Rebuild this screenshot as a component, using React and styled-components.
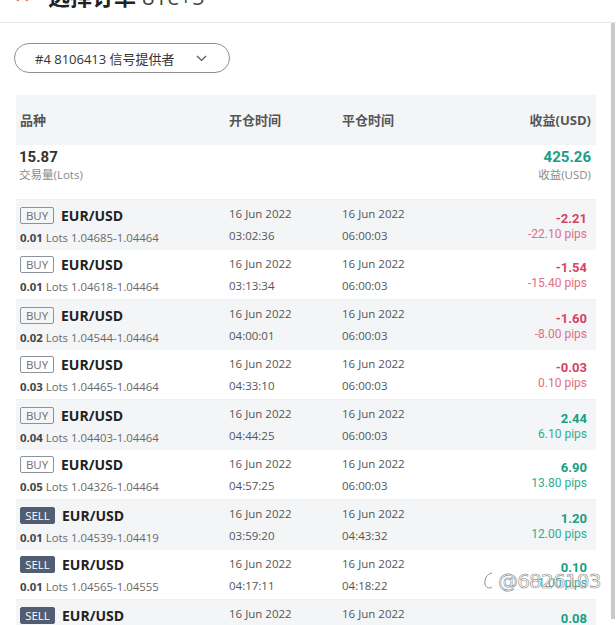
import React from 'react'
import styled, { createGlobalStyle } from 'styled-components'

const GlobalStyle = createGlobalStyle`
  html, body { margin: 0; padding: 0; background: #fff; }
  body { font-family: "Open Sans", "Noto Sans CJK SC", sans-serif; color: #333; }
  * { box-sizing: border-box; }
`

const trades = [
    { side: 'BUY', lots: '0.01', price: '1.04685-1.04464', open: '03:02:36', close: '06:00:03', pnl: '-2.21', pips: '-22.10 pips', loss: true },
    { side: 'BUY', lots: '0.01', price: '1.04618-1.04464', open: '03:13:34', close: '06:00:03', pnl: '-1.54', pips: '-15.40 pips', loss: true },
    { side: 'BUY', lots: '0.02', price: '1.04544-1.04464', open: '04:00:01', close: '06:00:03', pnl: '-1.60', pips: '-8.00 pips', loss: true },
    { side: 'BUY', lots: '0.03', price: '1.04465-1.04464', open: '04:33:10', close: '06:00:03', pnl: '-0.03', pips: '0.10 pips', loss: true },
    { side: 'BUY', lots: '0.04', price: '1.04403-1.04464', open: '04:44:25', close: '06:00:03', pnl: '2.44', pips: '6.10 pips' },
    { side: 'BUY', lots: '0.05', price: '1.04326-1.04464', open: '04:57:25', close: '06:00:03', pnl: '6.90', pips: '13.80 pips' },
    { side: 'SELL', lots: '0.01', price: '1.04539-1.04419', open: '03:59:20', close: '04:43:32', pnl: '1.20', pips: '12.00 pips' },
    { side: 'SELL', lots: '0.01', price: '1.04565-1.04555', open: '04:17:11', close: '04:18:22', pnl: '0.10', pips: '1.00 pips' },
    { side: 'SELL', lots: '0.01', price: '1.04512-1.04504', open: '04:20:05', close: '04:21:40', pnl: '0.08', pips: '0.80 pips' },
]

const Page = styled.div`
    position: relative;
    width: 616px;
    height: 625px;
    overflow: hidden;
`

const Header = styled.div`
    height: 23px;
    overflow: hidden;
    border-bottom: 1px solid #e6e6e6;
`

const HeaderInner = styled.div`
    display: flex;
    align-items: center;
    margin-top: -19px;
    padding-left: 14px;
    height: 28px;
`

const Close = styled.span`
    color: #e8773e;
    font-size: 20px;
    width: 34px;
`

const Title = styled.span`
    font-size: 22px;
    font-weight: 700;
    color: #222;
    span { font-weight: 400; color: #444; margin-left: 6px; }
`

const Body = styled.div`
    display: flex;
    height: 602px;
`

const Content = styled.div`
    flex: 1;
    padding: 20px 15px 0 14px;
`

const Rail = styled.div`
    width: 4px;
    margin: 0 1px 6px 0;
    background: #c9c9c9;
`

const Picker = styled.div`
    display: flex;
    align-items: center;
    justify-content: space-between;
    width: 216px;
    height: 30px;
    padding: 0 22px 0 20px;
    border: 1px solid #8f8f8f;
    border-radius: 15px;
    font-size: 13px;
    color: #333;
`

const Table = styled.div`
    margin: 22px 0 0 2px;
`

const Cols = styled.div`
    display: grid;
    grid-template-columns: 209px 113px 1fr auto;
    align-items: center;
`

const HeadRow = styled(Cols)`
    height: 50px;
    padding: 0 5px 2px 4px;
    background: #f4f5f7;
    font-size: 13px;
    font-weight: 700;
    color: #555;
`

const Summary = styled.div`
    display: flex;
    justify-content: space-between;
    height: 55px;
    padding: 3px 5px 0 3px;
    border-bottom: 1px solid #f0f0f0;
`

const Stat = styled.div`
    display: flex;
    flex-direction: column;
    align-items: ${p => p.right ? 'flex-end' : 'flex-start'};
`

const StatValue = styled.div`
    font-family: Roboto, sans-serif;
    font-size: 15px;
    font-weight: 700;
    line-height: 18px;
    color: ${p => p.color || '#333'};
`

const StatLabel = styled.div`
    font-size: 11.5px;
    line-height: 18px;
    color: #8a8a8a;
`

const Row = styled(Cols)`
    height: 50px;
    padding: 0 9px 0 4px;
    background: ${p => p.shade ? '#f4f5f7' : '#fff'};
    border-bottom: ${p => p.shade ? 'none' : '1px solid #f0f0f0'};
`

const Symbol = styled.div`
    display: flex;
    flex-direction: column;
    gap: 4px;
    padding-top: 2px;
`

const Line = styled.div`
    display: flex;
    align-items: center;
`

const Badge = styled.span`
    display: inline-flex;
    align-items: center;
    justify-content: center;
    width: ${p => p.sell ? '35px' : '34px'};
    height: 17px;
    font-size: 11.5px;
    border-radius: 2px;
    color: ${p => p.sell ? '#fff' : '#6e6e6e'};
    background: ${p => p.sell ? '#505d73' : 'transparent'};
    border: 1px solid ${p => p.sell ? '#505d73' : '#8b939e'};
`

const Pair = styled.span`
    margin-left: 7px;
    font-size: 14px;
    font-weight: 700;
    color: #222;
`

const Detail = styled.div`
    font-size: 11.4px;
    line-height: 18px;
    color: #6a6a6a;
    b { color: #444; }
`

const Time = styled.div`
    font-size: 11.5px;
    line-height: 22px;
    color: #555;
`

const Pnl = styled.div`
    display: flex;
    flex-direction: column;
    align-items: flex-end;
    padding-top: 2px;
    font-family: Roboto, sans-serif;
    color: ${p => p.loss ? '#d8435f' : '#17a084'};
    strong { font-size: 13px; line-height: 16px; }
    span { font-size: 12px; line-height: 15px; color: ${p => p.loss ? '#e06e84' : '#2eae93'}; }
`

const Watermark = styled.div`
    position: absolute;
    left: 481px;
    top: 569px;
    display: flex;
    align-items: center;
    gap: 1px;
    font-family: "DejaVu Sans", sans-serif;
    font-size: 20px;
    letter-spacing: -0.8px;
    color: rgba(255,255,255,0.55);
    -webkit-text-stroke: 0.6px #8a8a8a;
`

const Chevron = () => (
    <svg width="11" height="7" viewBox="0 0 11 7">
        <path d="M1 1l4.5 4.5L10 1" fill="none" stroke="#555" strokeWidth="1.2" />
    </svg>
)

const App = () => {
    return (
        <Page>
            <GlobalStyle />
            <Header>
                <HeaderInner>
                    <Close>✕</Close>
                    <Title>选择订单<span>81e+5</span></Title>
                </HeaderInner>
            </Header>
            <Body>
                <Content>
                    <Picker>
                        <span>#4 8106413 信号提供者</span>
                        <Chevron />
                    </Picker>
                    <Table>
                        <HeadRow>
                            <div>品种</div>
                            <div>开仓时间</div>
                            <div>平仓时间</div>
                            <div>收益(USD)</div>
                        </HeadRow>
                        <Summary>
                            <Stat>
                                <StatValue>15.87</StatValue>
                                <StatLabel>交易量(Lots)</StatLabel>
                            </Stat>
                            <Stat right>
                                <StatValue color="#17a084">425.26</StatValue>
                                <StatLabel>收益(USD)</StatLabel>
                            </Stat>
                        </Summary>
                        {trades.map((t, i) => (
                            <Row key={i} shade={i % 2 === 0}>
                                <Symbol>
                                    <Line>
                                        <Badge sell={t.side === 'SELL'}>{t.side}</Badge>
                                        <Pair>EUR/USD</Pair>
                                    </Line>
                                    <Detail><b>{t.lots}</b> Lots {t.price}</Detail>
                                </Symbol>
                                <div>
                                    <Time>16 Jun 2022</Time>
                                    <Time>{t.open}</Time>
                                </div>
                                <div>
                                    <Time>16 Jun 2022</Time>
                                    <Time>{t.close}</Time>
                                </div>
                                <Pnl loss={t.loss}>
                                    <strong>{t.pnl}</strong>
                                    <span>{t.pips}</span>
                                </Pnl>
                            </Row>
                        ))}
                    </Table>
                </Content>
                <Rail />
            </Body>
            <Watermark>
                <svg width="16" height="22" viewBox="0 0 16 22">
                    <path d="M11 3c-5 1-8 6-7 11 1 4 4 5 7 3" fill="none" stroke="#8a8a8a" strokeWidth="1" />
                </svg>
                <span>@6826103</span>
            </Watermark>
        </Page>
    )
}

export default App
